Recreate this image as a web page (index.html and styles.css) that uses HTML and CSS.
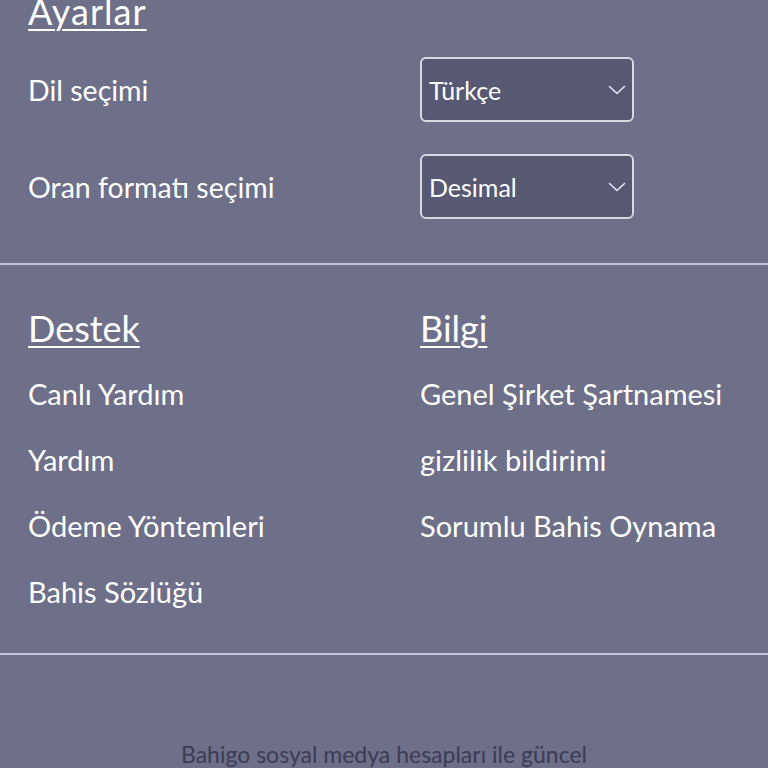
FILE: index.html
```html
<!DOCTYPE html>
<html lang="tr">
<head>
<meta charset="utf-8">
<link rel="stylesheet" href="styles.css">
</head>
<body>
<div class="page">
  <section class="settings">
    <h2 class="heading heading-wide">Ayarlar</h2>
    <div class="row">
      <span class="label">Dil seçimi</span>
      <div class="select">
        <span>Türkçe</span>
        <svg class="chev" width="18" height="10" viewBox="0 0 18 10"><path d="M1.5 1.5 L9 8.5 L16.5 1.5" fill="none" stroke="#e6e7ef" stroke-width="1.6" stroke-linecap="round" stroke-linejoin="round"/></svg>
      </div>
    </div>
    <div class="row">
      <span class="label">Oran formatı seçimi</span>
      <div class="select">
        <span>Desimal</span>
        <svg class="chev" width="18" height="10" viewBox="0 0 18 10"><path d="M1.5 1.5 L9 8.5 L16.5 1.5" fill="none" stroke="#e6e7ef" stroke-width="1.6" stroke-linecap="round" stroke-linejoin="round"/></svg>
      </div>
    </div>
  </section>
  <section class="links">
    <div class="col">
      <h2 class="heading">Destek</h2>
      <a class="link">Canlı Yardım</a>
      <a class="link">Yardım</a>
      <a class="link">Ödeme Yöntemleri</a>
      <a class="link">Bahis Sözlüğü</a>
    </div>
    <div class="col">
      <h2 class="heading">Bilgi</h2>
      <a class="link">Genel Şirket Şartnamesi</a>
      <a class="link">gizlilik bildirimi</a>
      <a class="link">Sorumlu Bahis Oynama</a>
    </div>
  </section>
  <section class="social">
    <p class="social-text">Bahigo sosyal medya hesapları ile güncel</p>
  </section>
</div>
</body>
</html>
```
FILE: styles.css
```css
html, body {
  margin: 0;
  padding: 0;
  background: #6e6f88;
}
body {
  font-family: "Lato", "Noto Sans", sans-serif;
  color: #ffffff;
  overflow: hidden;
  height: 768px;
}
.page {
  margin-top: -11px;
}
.heading {
  margin: 0;
  font-size: 36px;
  font-weight: 400;
  line-height: 44px;
  text-decoration: underline;
  text-decoration-thickness: 2px;
  text-underline-offset: 4px;
}
.heading-wide {
  letter-spacing: 1px;
}
.settings {
  padding: 0 28px 44px;
  border-bottom: 2px solid #c2c4d6;
}
.settings .heading {
  margin-bottom: 24px;
}
.row {
  display: grid;
  grid-template-columns: 392px 214px;
  align-items: center;
  margin-bottom: 32px;
}
.row:last-child {
  margin-bottom: 0;
}
.label {
  font-size: 28.5px;
  line-height: 32px;
}
.select {
  box-sizing: border-box;
  height: 65px;
  border: 2px solid #d6d8e4;
  border-radius: 6px;
  background: #575871;
  display: flex;
  align-items: center;
  justify-content: space-between;
  padding: 0 6px 0 7px;
  font-size: 25px;
}
.chev {
  display: block;
}
.links {
  display: grid;
  grid-template-columns: 392px 1fr;
  padding: 41px 28px 28px;
  border-bottom: 2px solid #c2c4d6;
}
.col {
  display: flex;
  flex-direction: column;
}
.col .heading {
  margin-bottom: 11px;
}
.link {
  font-size: 29px;
  line-height: 66px;
  color: #ffffff;
}
.social {
  padding-top: 83px;
  text-align: center;
}
.social-text {
  margin: 0;
  font-size: 23px;
  line-height: 32px;
  color: #3b3c55;
}
```
